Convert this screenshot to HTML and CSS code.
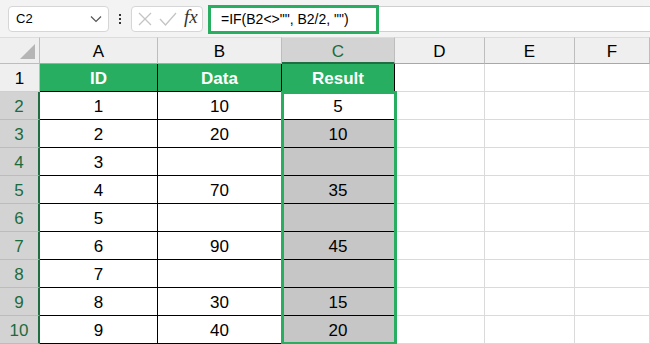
FILE: index.html
```html
<!DOCTYPE html>
<html lang="en">
<head>
  <meta charset="UTF-8">
  <title>Sheet</title>
  <link rel="stylesheet" href="styles.css">
</head>
<body>
  <div class="toolbar">
    <div class="namebox">
      <span>C2</span>
      <svg width="12" height="8" viewBox="0 0 12 8"><path d="M1 1.5 L6 6.5 L11 1.5" fill="none" stroke="#555" stroke-width="1.2"/></svg>
    </div>
    <div class="dots"><i></i><i></i><i></i></div>
    <div class="fxbox">
      <svg width="16" height="16" viewBox="0 0 16 16"><path d="M2 2 L14 14 M14 2 L2 14" stroke="#c4c4c4" stroke-width="1.3"/></svg>
      <svg width="18" height="16" viewBox="0 0 18 16"><path d="M1 8 L6.5 14 L17 2" fill="none" stroke="#c4c4c4" stroke-width="1.3"/></svg>
      <span class="fx">fx</span>
    </div>
    <div class="formula">
      <div class="formula-text">=IF(B2&lt;&gt;"", B2/2, "")</div>
    </div>
  </div>

  <div class="sheet">
    <div class="corner"></div>
    <div class="ch">A</div>
    <div class="ch">B</div>
    <div class="ch sel">C</div>
    <div class="ch">D</div>
    <div class="ch">E</div>
    <div class="ch">F</div>

    <div class="rh">1</div>
    <div class="c t head">ID</div>
    <div class="c t head">Data</div>
    <div class="c t head">Result</div>
    <div class="c"></div><div class="c"></div><div class="c"></div>

    <div class="rh sel">2</div>
    <div class="c t">1</div>
    <div class="c t">10</div>
    <div class="c t active">5</div>
    <div class="c"></div><div class="c"></div><div class="c"></div>

    <div class="rh sel">3</div>
    <div class="c t">2</div>
    <div class="c t">20</div>
    <div class="c t hl">10</div>
    <div class="c"></div><div class="c"></div><div class="c"></div>

    <div class="rh sel">4</div>
    <div class="c t">3</div>
    <div class="c t"></div>
    <div class="c t hl"></div>
    <div class="c"></div><div class="c"></div><div class="c"></div>

    <div class="rh sel">5</div>
    <div class="c t">4</div>
    <div class="c t">70</div>
    <div class="c t hl">35</div>
    <div class="c"></div><div class="c"></div><div class="c"></div>

    <div class="rh sel">6</div>
    <div class="c t">5</div>
    <div class="c t"></div>
    <div class="c t hl"></div>
    <div class="c"></div><div class="c"></div><div class="c"></div>

    <div class="rh sel">7</div>
    <div class="c t">6</div>
    <div class="c t">90</div>
    <div class="c t hl">45</div>
    <div class="c"></div><div class="c"></div><div class="c"></div>

    <div class="rh sel">8</div>
    <div class="c t">7</div>
    <div class="c t"></div>
    <div class="c t hl"></div>
    <div class="c"></div><div class="c"></div><div class="c"></div>

    <div class="rh sel">9</div>
    <div class="c t">8</div>
    <div class="c t">30</div>
    <div class="c t hl">15</div>
    <div class="c"></div><div class="c"></div><div class="c"></div>

    <div class="rh sel">10</div>
    <div class="c t">9</div>
    <div class="c t">40</div>
    <div class="c t hl">20</div>
    <div class="c"></div><div class="c"></div><div class="c"></div>

    <!-- selection outline over C2:C10 -->
    <div class="selection"></div>
  </div>
</body>
</html>
```

FILE: styles.css
```css
* { box-sizing: border-box; }
body {
  margin: 0;
  width: 650px;
  height: 344px;
  overflow: hidden;
  background: #fff;
  font-family: "Liberation Sans", Arial, sans-serif;
  color: #000;
}

/* formula bar */
.toolbar {
  height: 37px;
  background: #f3f3f3;
  display: flex;
  align-items: center;
  padding-left: 8px;
}
.namebox {
  width: 101px;
  height: 26px;
  background: #fff;
  border: 1px solid #d6d6d6;
  border-radius: 4px;
  display: flex;
  align-items: center;
  justify-content: space-between;
  padding: 0 6px 0 7px;
  font-size: 13px;
}
.dots {
  width: 22px;
  display: flex;
  flex-direction: column;
  align-items: center;
  gap: 2px;
}
.dots i {
  width: 2px;
  height: 2px;
  background: #333;
}
.fxbox {
  width: 72px;
  height: 26px;
  background: #fff;
  border: 1px solid #d6d6d6;
  border-radius: 4px;
  display: flex;
  align-items: center;
  gap: 6px;
  padding-left: 5px;
}
.fx {
  font-family: "Liberation Serif", "Times New Roman", serif;
  font-style: italic;
  font-size: 19px;
  color: #333;
  margin-left: 1px;
  margin-top: -3px;
}
.formula {
  flex: 1;
  margin-left: 5px;
  height: 26px;
  background: #fff;
  border-top: 1px solid #cfcfcf;
  border-bottom: 1px solid #cfcfcf;
  position: relative;
}
.formula-text {
  position: absolute;
  left: 0;
  top: -2px;
  width: 171px;
  height: 29px;
  border: 3px solid #27ae60;
  padding-left: 10px;
  font-size: 14px;
  line-height: 23px;
}

/* sheet grid */
.sheet {
  position: relative;
  display: grid;
  grid-template-columns: 40px 118px 124px 113px 90px 90px 75px;
  grid-template-rows: 27px repeat(10, 28px);
  font-size: 17px;
}
.corner {
  background: #efefef;
  border-right: 1px solid #bdbdbd;
  border-bottom: 1px solid #bdbdbd;
  border-top: 1px solid #dcdcdc;
  position: relative;
}
.corner::after {
  content: "";
  position: absolute;
  right: 4px;
  bottom: 4px;
  border-left: 15px solid transparent;
  border-bottom: 15px solid #b5b5b5;
}
.ch {
  background: #efefef;
  border-top: 1px solid #dcdcdc;
  border-right: 1px solid #bdbdbd;
  border-bottom: 1px solid #a8a8a8;
  display: flex;
  align-items: center;
  justify-content: center;
  padding-top: 3px;
}
.ch.sel {
  background: #d3d3d3;
  color: #1c6b3e;
  border-bottom: 2px solid #1e6e42;
}
.rh {
  background: #efefef;
  border-right: 1px solid #bdbdbd;
  border-bottom: 1px solid #cfcfcf;
  display: flex;
  align-items: center;
  justify-content: center;
  padding-top: 2px;
}
.rh.sel {
  background: #d3d3d3;
  color: #1c6b3e;
  border-right: 2px solid #1e6e42;
  border-bottom-color: #bcbcbc;
}
.c {
  border-right: 1px solid #dadada;
  border-bottom: 1px solid #dadada;
  display: flex;
  align-items: center;
  justify-content: center;
  padding-top: 2px;
}
.c.t {
  border-right-color: #000;
  border-bottom-color: #000;
}
.c.head {
  background: #27ae60;
  color: #fff;
  font-weight: bold;
}
.c.hl { background: #c6c6c6; }
.c.active { background: #fff; }

.selection {
  position: absolute;
  left: 281px;
  top: 54px;
  width: 116px;
  height: 254px;
  border: 3px solid #27ae60;
  pointer-events: none;
}
```
